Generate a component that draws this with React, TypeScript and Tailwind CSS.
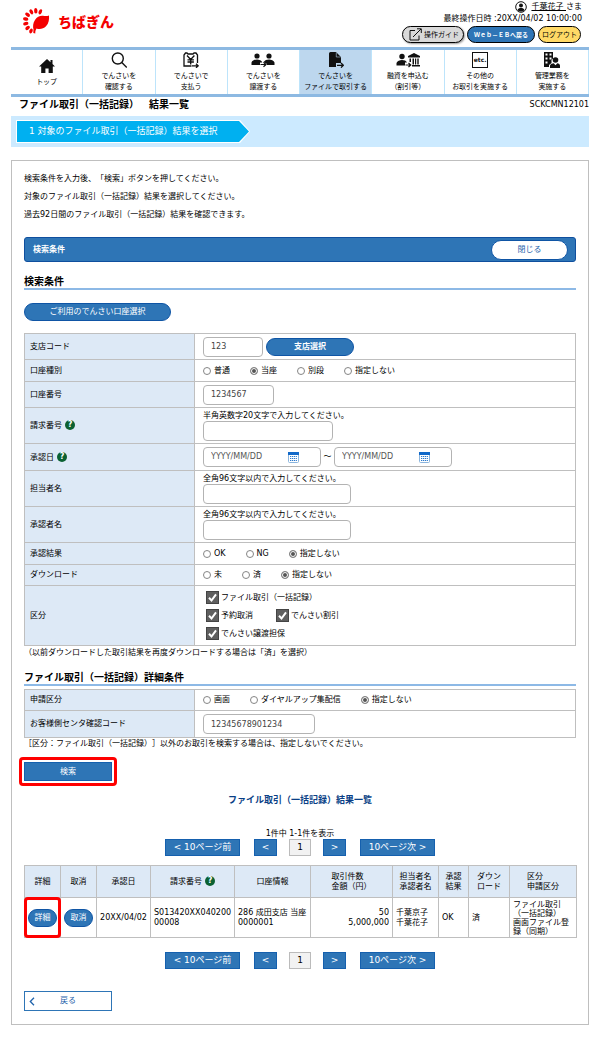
import type { ReactNode } from "react";

const FONT =
  "font-['DejaVu_Sans','Noto_Sans_CJK_JP',sans-serif] [text-spacing-trim:space-all]";

function Logo() {
  return (
    <svg viewBox="0 0 28 28" className="h-7 w-7" fill="#f40000" aria-hidden="true">
      <path d="M11.500 21.500c-.8-3-.5-6.500 1.500-9.500C15 8.800 18 7.500 21 7.800c2.500.5 4.500.2 6-.3.300 4-.2 8-3 10.800-2.500 2.700-6.500 3.400-9.500 2.200-.9 1.600-1.300 3-1.200 5l-2-.4c0-1.300.1-2.500.2-3.600z" />
      <ellipse cx="13.800" cy="2.800" rx="1.700" ry="2.700" transform="rotate(-3 13.800 2.800)" />
      <ellipse cx="18.300" cy="3.800" rx="1.600" ry="2.700" transform="rotate(25 18.300 3.800)" />
      <ellipse cx="9.300" cy="3.800" rx="1.700" ry="2.700" transform="rotate(-28 9.300 3.800)" />
      <ellipse cx="5.600" cy="6.700" rx="1.700" ry="2.700" transform="rotate(-54 5.600 6.700)" />
      <ellipse cx="3.700" cy="11" rx="1.700" ry="2.700" transform="rotate(-78 3.700 11)" />
      <ellipse cx="3.800" cy="15.600" rx="1.700" ry="2.700" transform="rotate(-103 3.800 15.600)" />
      <ellipse cx="5.600" cy="19.900" rx="1.700" ry="2.600" transform="rotate(-130 5.600 19.900)" />
      <ellipse cx="9" cy="23" rx="1.600" ry="2.500" transform="rotate(-155 9 23)" />
    </svg>
  );
}

function Svg({ wide, children }: { wide?: boolean; children: ReactNode }) {
  return (
    <svg
      viewBox={wide ? "0 0 24 16" : "0 0 16 16"}
      className={wide ? "h-4 w-6" : "h-4 w-4"}
      fill="#111"
      aria-hidden="true"
    >
      {children}
    </svg>
  );
}

const icons = {
  home: (
    <Svg>
      <path d="M8 1 0 8.500h2.200V15h4.200v-4.500h3.200V15h4.200V8.500H16L13.500 6.100V2h-2v2.300z" />
    </Svg>
  ),
  search: (
    <Svg>
      <g fill="none" stroke="#111" strokeWidth="1.400">
        <circle cx="6.800" cy="6.500" r="5.500" />
        <path d="m10.800 10.500 5 5" />
      </g>
    </Svg>
  ),
  pay: (
    <Svg>
      <g fill="none" stroke="#111" strokeWidth="1.300">
        <path d="M8.500 14H1V3l1.500-2h1.500l1 1h5l1-1H13l1.500 2v8" />
        <path d="m4 3.500 3.700 4 3.700-4M7.700 7.500v5M4.500 7.800h6.400M4.500 10h6.400" />
        <path d="M9 13.800h6M13 11.800l2.200 2-2.200 2" />
      </g>
    </Svg>
  ),
  transfer: (
    <Svg wide>
      <circle cx="6" cy="4" r="2.600" />
      <circle cx="18" cy="4" r="2.600" />
      <path d="M.5 13v-2.500C1 8.500 4 7.500 6 7.500s5 1 5.300 3H9V13zM23.500 13v-2.500c-.5-2-3.500-3-5.500-3s-4.500.8-5.300 2.500L16 12v1z" />
      <path d="M9.500 12.500h5M12.500 10.300l2.500 2.200-2.500 2.200" fill="none" stroke="#111" strokeWidth="1.200" />
    </Svg>
  ),
  file: (
    <Svg>
      <path d="M1 1.500Q1 0 2.500 0H8l5 5v6H8v4H1z" />
      <path d="M8.300.5V5h4.400" fill="none" stroke="#bdd7ee" strokeWidth=".6" />
      <path d="M9 13.300h6M13 11l2.300 2.300L13 15.600" fill="none" stroke="#111" strokeWidth="1.300" />
    </Svg>
  ),
  bank: (
    <Svg wide>
      <circle cx="6" cy="4.500" r="2.700" />
      <path d="M.5 13.500V11C1 9 4 8 6 8s4.500.8 5 2.500H9v3z" />
      <path d="M9.500 13h5M12.500 11l2.200 2-2.200 2" fill="none" stroke="#111" strokeWidth="1.200" />
      <path d="m18 1 6 3v1.500H12V4zM13.500 6.500h1.500V10h-1.500zM16.500 6.500H18v6h-1.500zM19 6.500h1.200v6H19zM21.300 6.500h1.400v6h-1.400zM16 13h8v1.500h-8z" />
    </Svg>
  ),
  other: (
    <span className="flex h-4 w-4 items-center justify-center border border-[#111] text-[6px] font-bold leading-none text-[#111]">
      etc.
    </span>
  ),
  admin: (
    <Svg>
      <path
        fillRule="evenodd"
        d="M0 0h9v6.500L7.500 8v3L5 13v2H0zM1.500 1.500v2h2v-2zm4 0v2h2v-2zm-4 4v2h2v-2zm4 0v2h2v-2zm-4 4v2h2v-2z"
      />
      <circle cx="11.500" cy="8" r="2.800" />
      <path d="M6 16v-2.500c.5-1.500 2.500-2.300 3.700-2.300l1.800 2 1.800-2c1.200 0 2.400.8 2.700 2.300V16z" />
    </Svg>
  ),
};

const navItems: { icon: keyof typeof icons; lines: string[]; active?: boolean }[] = [
  { icon: "home", lines: ["トップ"] },
  { icon: "search", lines: ["でんさいを", "確認する"] },
  { icon: "pay", lines: ["でんさいで", "支払う"] },
  { icon: "transfer", lines: ["でんさいを", "譲渡する"] },
  { icon: "file", lines: ["でんさいを", "ファイルで取引する"], active: true },
  { icon: "bank", lines: ["融資を申込む", "（割引等）"] },
  { icon: "other", lines: ["その他の", "お取引を実施する"] },
  { icon: "admin", lines: ["管理業務を", "実施する"] },
];

function Help() {
  return (
    <button
      type="button"
      aria-label="ヘルプ"
      className="ml-[3px] inline-flex h-[10px] w-[10px] items-center justify-center rounded-full bg-[#0b6132] align-middle text-[8px] font-bold leading-none text-white"
    >
      ?
    </button>
  );
}

function Row({ label, help, height, htmlFor, children }: {
  label: string;
  help?: boolean;
  height: string;
  htmlFor?: string;
  children: ReactNode;
}) {
  return (
    <tr className={height}>
      <th scope="row" className="border border-[#bfbfbf] bg-[#dde9f6] p-0 pl-[5px] text-left font-normal">
        {htmlFor ? <label htmlFor={htmlFor}>{label}</label> : label}
        {help && <Help />}
      </th>
      <td className="border border-[#bfbfbf] p-0 pl-2">{children}</td>
    </tr>
  );
}

function Radios({ name, options, selected }: { name: string; options: string[]; selected: string }) {
  return (
    <div className="flex items-center gap-5">
      {options.map((o) => (
        <label key={o} className="flex items-center gap-[3px]">
          <input
            type="radio"
            name={name}
            defaultChecked={o === selected}
            className="h-2 w-2 appearance-none rounded-full border border-[#858585] bg-white checked:bg-[#555] checked:shadow-[inset_0_0_0_1px_#fff]"
          />
          {o}
        </label>
      ))}
    </div>
  );
}

function Check({ label }: { label: string }) {
  return (
    <label className="flex h-[18px] items-center gap-[2px]">
      <span className="grid h-[13px] w-[13px] place-items-center">
        <input
          type="checkbox"
          defaultChecked
          className="col-start-1 row-start-1 h-[13px] w-[13px] appearance-none border border-[#444] bg-[#5f5f5f]"
        />
        <svg viewBox="0 0 13 13" className="pointer-events-none col-start-1 row-start-1 h-[13px] w-[13px]" fill="none" stroke="#fff" strokeWidth="2" aria-hidden="true">
          <path d="m3 6.800 2.500 2.700L10 3.300" />
        </svg>
      </span>
      {label}
    </label>
  );
}

const inputBase = "block h-5 rounded border border-[#b3b3b3] bg-white px-[7px] text-[8px] text-[#444] placeholder:text-[#555]";

function DateBox({ label }: { label: string }) {
  return (
    <div className="flex h-5 w-[118px] items-center rounded border border-[#b3b3b3] pl-[7px]">
      <input aria-label={label} placeholder="YYYY/MM/DD" className="w-[77px] text-[8px] text-[#444] placeholder:text-[#555]" />
      <button type="button" aria-label="カレンダー">
        <svg viewBox="0 0 11 11" className="block h-[11px] w-[11px]" aria-hidden="true">
          <rect x=".5" y=".5" width="10" height="10" rx="1" fill="#fff" stroke="#8ab4dd" />
          <path d="M0 0h11v3H0z" fill="#1169c9" />
          <path d="M2 4.500h7M2 6.500h7M2 8.500h7" stroke="#2a79cc" strokeWidth="1.200" strokeDasharray="1.200 .7" />
        </svg>
      </button>
    </div>
  );
}

function Pager() {
  const btn = "h-[17px] border border-[#1560ae] bg-[#2e75b6] text-[9px] leading-[15px] text-white";
  return (
    <nav className="flex items-center justify-center" aria-label="ページ">
      <button type="button" className={`${btn} w-[75px]`}>&lt; 10ページ前</button>
      <button type="button" className={`${btn} ml-[14px] w-[23px]`}>&lt;</button>
      <button type="button" aria-current="page" className="ml-3 h-[17px] w-[22px] border border-[#bbb] bg-[#f2f2f2] text-[9px] leading-[15px]">1</button>
      <button type="button" className={`${btn} ml-3 w-[23px]`}>&gt;</button>
      <button type="button" className={`${btn} ml-[14px] w-[75px]`}>10ページ次 &gt;</button>
    </nav>
  );
}

const pill = "rounded-full border border-[#0f55a5] bg-[#2e75b6] text-white";
const th = "border border-[#bfbfbf] bg-[#dde9f6] p-0 text-center font-normal";
const td = "border border-[#bfbfbf] p-0";
const heading = "border-b-2 border-[#8db9e6] text-[10px] font-bold leading-[12px]";

export default function App() {
  return (
    <div className={`${FONT} bg-white px-[11px] pb-3 text-[8px] leading-[10px] text-black`} lang="ja">
      <header className="flex h-[47px] justify-between">
        <div className="flex items-center gap-2 pb-[3px] pl-[11px]">
          <Logo />
          <span className="text-[14px] font-black text-[#f40000]">ちばぎん</span>
        </div>
        <div className="flex flex-col items-end pr-[7px] pt-px">
          <div className="flex h-3 items-center gap-1">
            <svg viewBox="0 0 12 12" className="h-3 w-3" aria-hidden="true">
              <circle cx="6" cy="6" r="5.300" fill="#fff" stroke="#111" />
              <circle cx="6" cy="4.500" r="2" fill="#111" />
              <path d="M2.500 9c.5-1.500 2-2 3.500-2s3 .5 3.500 2C8.500 10 7.300 10.500 6 10.500S3.500 10 2.500 9z" fill="#111" />
            </svg>
            <span><a href="#user" className="underline">千葉花子 </a>さま</span>
          </div>
          <div className="h-3 leading-[12px]">最終操作日時 :20XX/04/02 10:00:00</div>
          <div className="flex gap-[3px] pr-px pt-px">
            <button type="button" className="flex h-[17px] w-[62px] items-center gap-[2px] rounded-full border border-black bg-[#d9d9d9] pl-[6px] text-[7px] shadow-[1px_1px_2px_#999]">
              <svg viewBox="0 0 13 13" className="h-[13px] w-[13px]" fill="none" stroke="#111" aria-hidden="true">
                <path d="M6 2.500H1v9.500h9V7.500M4 9l8-8M8 .8h4.300V5" />
              </svg>
              操作ガイド
            </button>
            <button type="button" className="h-[17px] w-[68px] rounded-full border border-black bg-[#2e75b6] text-[6px] font-bold text-white">Ｗｅｂ－ＥＢへ戻る</button>
            <button type="button" className="h-[17px] w-[43px] rounded-full border border-black bg-[#ffd966] text-[7px]">ログアウト</button>
          </div>
        </div>
      </header>

      <nav className="flex h-[50px] border-y-[3px] border-[#8db9e2]" aria-label="メイン">
        {navItems.map((n) => (
          <a
            key={n.lines.join("")}
            href="#menu"
            className={`flex min-w-0 flex-1 flex-col items-center justify-center whitespace-nowrap border-r border-[#bde4fb] pt-px text-[7px] leading-[11px] ${n.active ? "bg-[#bdd7ee]" : ""}`}
          >
            <span className="mb-[3px]">{icons[n.icon]}</span>
            {n.lines.map((l) => (
              <span key={l}>{l}</span>
            ))}
          </a>
        ))}
      </nav>

      <div className="flex h-[19px] items-start justify-between pl-2">
        <h1 className="text-[10px] font-bold leading-[15px]">ファイル取引（一括記録）　結果一覧</h1>
        <span className="text-[8px] leading-[16px]">SCKCMN12101</span>
      </div>

      <div className="h-[31px] bg-[#cceaff] px-[5px] py-1">
        <div className="h-[23px] w-[234px] bg-white [clip-path:polygon(0_0,calc(100%-10px)_0,100%_50%,calc(100%-10px)_100%,0_100%)] p-px">
          <div className="h-[21px] bg-[#00b0f0] pl-3 text-[9px] leading-[20px] text-white [clip-path:polygon(0_0,calc(100%-10px)_0,100%_50%,calc(100%-10px)_100%,0_100%)]">
            1 対象のファイル取引（一括記録）結果を選択
          </div>
        </div>
      </div>

      <main className="mt-[13px] border border-[#bfbfbf] px-3 pb-[13px] pt-[9px]">
        <div className="leading-[18px]">
          <p>検索条件を入力後、「検索」ボタンを押してください。</p>
          <p>対象のファイル取引（一括記録）結果を選択してください。</p>
          <p>過去92日間のファイル取引（一括記録）結果を確認できます。</p>
        </div>

        <div className="mt-[13px] flex h-[25px] items-center justify-between rounded-[3px] border border-[#0f4f9e] bg-[#2e75b6] pl-2 pr-[7px] text-white">
          <span className="font-bold">検索条件</span>
          <button type="button" className="h-5 w-[77px] rounded-full border border-[#0f55a5] bg-white text-[#1f63ab]">閉じる</button>
        </div>

        <h2 className={`${heading} mt-[14px]`}>検索条件</h2>
        <button type="button" className={`${pill} mt-[13px] block h-[18px] w-[147px]`}>ご利用のでんさい口座選択</button>

        <table className="mt-3 w-full table-fixed border-collapse">
          <colgroup>
            <col className="w-[170px]" />
            <col />
          </colgroup>
          <tbody>
            <Row label="支店コード" height="h-[26px]" htmlFor="branch">
              <div className="flex items-center gap-[3px]">
                <input id="branch" defaultValue="123" className={`${inputBase} w-[60px]`} />
                <button type="button" className={`${pill} h-[18px] w-[88px] font-bold`}>支店選択</button>
              </div>
            </Row>
            <Row label="口座種別" height="h-[22px]">
              <Radios name="kind" options={["普通", "当座", "別段", "指定しない"]} selected="当座" />
            </Row>
            <Row label="口座番号" height="h-[26px]" htmlFor="account">
              <input id="account" defaultValue="1234567" className={`${inputBase} w-[71px]`} />
            </Row>
            <Row label="請求番号" help height="h-[36px]" htmlFor="claim">
              <p>半角英数字20文字で入力してください。</p>
              <input id="claim" className={`${inputBase} w-[130px]`} />
            </Row>
            <Row label="承認日" help height="h-[27px]">
              <div className="flex items-center">
                <DateBox label="承認日（開始）" />
                <span className="w-[13px] text-center">～</span>
                <DateBox label="承認日（終了）" />
              </div>
            </Row>
            <Row label="担当者名" height="h-[36px]" htmlFor="staff">
              <p>全角96文字以内で入力してください。</p>
              <input id="staff" className={`${inputBase} w-[148px]`} />
            </Row>
            <Row label="承認者名" height="h-[36px]" htmlFor="approver">
              <p>全角96文字以内で入力してください。</p>
              <input id="approver" className={`${inputBase} w-[148px]`} />
            </Row>
            <Row label="承認結果" height="h-[22px]">
              <Radios name="result" options={["OK", "NG", "指定しない"]} selected="指定しない" />
            </Row>
            <Row label="ダウンロード" height="h-[21px]">
              <Radios name="download" options={["未", "済", "指定しない"]} selected="指定しない" />
            </Row>
            <Row label="区分" height="h-[60px]">
              <div className="pl-[3px]">
                <Check label="ファイル取引（一括記録）" />
                <div className="flex gap-[23px]">
                  <Check label="予約取消" />
                  <Check label="でんさい割引" />
                </div>
                <Check label="でんさい譲渡担保" />
              </div>
            </Row>
          </tbody>
        </table>
        <p className="mt-[2px]">（以前ダウンロードした取引結果を再度ダウンロードする場合は「済」を選択）</p>

        <h2 className={`${heading} mt-[14px]`}>ファイル取引（一括記録）詳細条件</h2>
        <table className="mt-[3px] w-full table-fixed border-collapse">
          <colgroup>
            <col className="w-[170px]" />
            <col />
          </colgroup>
          <tbody>
            <Row label="申請区分" height="h-[21px]">
              <Radios name="apply" options={["画面", "ダイヤルアップ集配信", "指定しない"]} selected="指定しない" />
            </Row>
            <Row label="お客様側センタ確認コード" height="h-[27px]" htmlFor="center">
              <input id="center" defaultValue="12345678901234" className={`${inputBase} w-[112px]`} />
            </Row>
          </tbody>
        </table>
        <p className="mt-px">［区分：ファイル取引（一括記録）］以外のお取引を検索する場合は、指定しないでください。</p>

        <div className="relative mt-[13px] w-[88px]">
          <button type="button" className="block h-[19px] w-full border border-[#1560ae] bg-[#2e75b6] text-white">検索</button>
          <span className="pointer-events-none absolute -inset-[5px] rounded-[4px] border-[3px] border-[#ff0000]" />
        </div>

        <h2 className="mt-[13px] text-center text-[9px] font-bold leading-[12px] text-[#0a3f86]">ファイル取引（一括記録）結果一覧</h2>
        <p className="mt-[23px] text-center">1件中 1-1件を表示</p>
        <Pager />

        <table className="mt-[9px] w-full table-fixed border-collapse">
          <colgroup>
            <col className="w-[36px]" />
            <col className="w-[36px]" />
            <col className="w-[54px]" />
            <col className="w-[84px]" />
            <col className="w-[76px]" />
            <col className="w-[82px]" />
            <col className="w-[46px]" />
            <col className="w-[30px]" />
            <col className="w-[41px]" />
            <col className="w-[67px]" />
          </colgroup>
          <thead>
            <tr className="h-8">
              <th className={th}>詳細</th>
              <th className={th}>取消</th>
              <th className={th}>承認日</th>
              <th className={th}>請求番号<Help /></th>
              <th className={th}>口座情報</th>
              <th className={th}><span className="inline-block text-left">取引件数<br />金額（円）</span></th>
              <th className={th}>担当者名<br />承認者名</th>
              <th className={th}>承認<br />結果</th>
              <th className={th}>ダウン<br />ロード</th>
              <th className={th}><span className="inline-block text-left">区分<br />申請区分</span></th>
            </tr>
          </thead>
          <tbody>
            <tr className="h-[40px]">
              <td className={`${td} relative text-center`}>
                <button type="button" className={`${pill} h-[18px] w-[29px]`}>詳細</button>
                <span className="pointer-events-none absolute -inset-px rounded-[4px] border-[3px] border-[#ff0000]" />
              </td>
              <td className={`${td} text-center`}>
                <button type="button" className={`${pill} h-[18px] w-[29px]`}>取消</button>
              </td>
              <td className={`${td} text-center`}>20XX/04/02</td>
              <td className={`${td} pl-[3px]`}>S013420XX040200<br />00008</td>
              <td className={`${td} pl-[3px]`}>286 成田支店 当座<br />0000001</td>
              <td className={`${td} pr-[3px] text-right`}>50<br />5,000,000</td>
              <td className={`${td} pl-[3px]`}>千葉京子<br />千葉花子</td>
              <td className={`${td} pl-[3px]`}>OK</td>
              <td className={`${td} pl-[3px]`}>済</td>
              <td className={`${td} pl-[3px] leading-[9px]`}>ファイル取引<br />（一括記録）<br />画面ファイル登<br />録（同期）</td>
            </tr>
          </tbody>
        </table>

        <div className="mt-[14px]">
          <Pager />
        </div>

        <button type="button" className="mt-[22px] flex h-5 w-[88px] items-center border border-[#2e75b6] bg-white pl-1 text-[#1f63ab]">
          <svg viewBox="0 0 6 9" className="h-[9px] w-[6px]" fill="none" stroke="#1f63ab" strokeWidth="1.300" aria-hidden="true">
            <path d="M5 .7 1.300 4.500 5 8.300" />
          </svg>
          <span className="ml-[25px]">戻る</span>
        </button>
      </main>
    </div>
  );
}
